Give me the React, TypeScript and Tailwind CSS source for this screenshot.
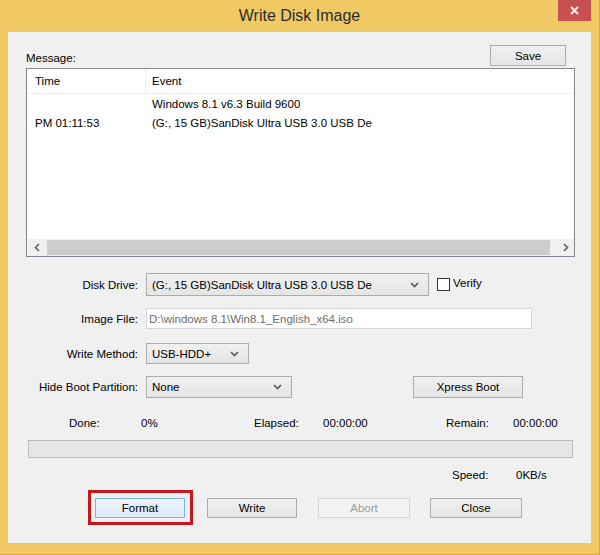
import type { ReactNode } from "react";

type BtnProps = {
  children: ReactNode;
  className?: string;
  variant?: "normal" | "focused" | "disabled";
};

function Btn({ children, className = "", variant = "normal" }: BtnProps) {
  const look =
    variant === "focused"
      ? "border-[#7eb4ea] bg-gradient-to-b from-[#ecf4fc] to-[#dcecfc] text-black"
      : variant === "disabled"
        ? "border-[#d5d5d5] bg-[#f4f4f4] text-[#9a9a9a]"
        : "border-[#acacac] bg-gradient-to-b from-[#f0f0f0] to-[#e5e5e5] text-black";
  return (
    <div className={`flex items-center justify-center border ${look} ${className}`}>
      {children}
    </div>
  );
}

function Chevron({ className = "" }: { className?: string }) {
  return (
    <svg width="9" height="6" viewBox="0 0 9 6" className={className} aria-hidden="true">
      <path d="M1 1l3.5 3.5L8 1" fill="none" stroke="currentColor" strokeWidth="1.6" />
    </svg>
  );
}

function Select({ value, className = "" }: { value: string; className?: string }) {
  return (
    <div
      className={`flex items-center justify-between border border-[#acacac] bg-gradient-to-b from-[#f0f0f0] to-[#e5e5e5] pl-[5px] pr-[9px] ${className}`}
    >
      <span className="whitespace-nowrap">{value}</span>
      <Chevron className="text-[#555]" />
    </div>
  );
}

function Row({ label, className = "", children }: { label: string; className?: string; children: ReactNode }) {
  return (
    <div className={`flex items-center ${className}`}>
      <div className="w-[130px] text-right">{label}</div>
      <div className="ml-[8px] flex items-center h-full">{children}</div>
    </div>
  );
}

export default function App() {
  return (
    <div className="w-[600px] h-[555px] bg-[#f0c864] border-r border-b border-[#d9a945] flex flex-col font-['Liberation_Sans',Arial,sans-serif] leading-[14px]">
      {/* Title bar */}
      <div className="relative h-[32px] flex items-center justify-center">
        <span className="text-[16px] text-[#2d2d2d]">Write Disk Image</span>
        <div className="absolute right-[8px] top-0 w-[33px] h-[21px] bg-[#c75050] flex items-center justify-center">
          <svg width="9" height="9" viewBox="0 0 9 9" aria-hidden="true">
            <path d="M1 1l7 7M8 1L1 8" stroke="white" strokeWidth="1.8" />
          </svg>
        </div>
      </div>

      {/* Client area */}
      <div className="ml-[8px] w-[583px] h-[511px] bg-[#f0f0f0] flex flex-col text-[11.5px] text-black">
        <div className="flex items-end justify-between pl-[18px] pr-[25px] pt-[13px]">
          <span className="mb-[1px]">Message:</span>
          <Btn className="w-[76px] h-[21px]">Save</Btn>
        </div>

        {/* Log list */}
        <div className="ml-[18px] mt-[2px] w-[549px] h-[189px] border border-[#828790] bg-white flex flex-col">
          <div className="h-[25px] flex border-b border-[#efefef]">
            <div className="w-[119px] pl-[8px] flex items-center border-r border-[#ececec]">Time</div>
            <div className="pl-[6px] flex items-center">Event</div>
          </div>
          <div className="h-[19px] flex items-center">
            <div className="w-[119px] pl-[8px]" />
            <div className="pl-[6px]">Windows 8.1 v6.3 Build 9600</div>
          </div>
          <div className="h-[19px] flex items-center">
            <div className="w-[119px] pl-[8px]">PM 01:11:53</div>
            <div className="pl-[6px]">(G:, 15 GB)SanDisk Ultra USB 3.0 USB De</div>
          </div>
          <div className="flex-1" />
          <div className="h-[17px] flex items-center bg-[#f0f0f0]">
            <div className="w-[20px] flex justify-center text-[#606060]">
              <svg width="6" height="9" viewBox="0 0 6 9" aria-hidden="true">
                <path d="M5 1L1.5 4.5 5 8" fill="none" stroke="currentColor" strokeWidth="1.6" />
              </svg>
            </div>
            <div className="w-[503px] h-[15px] bg-[#cdcdcd]" />
            <div className="flex-1" />
            <div className="w-[17px] flex justify-center text-[#606060]">
              <svg width="6" height="9" viewBox="0 0 6 9" aria-hidden="true">
                <path d="M1 1l3.5 3.5L1 8" fill="none" stroke="currentColor" strokeWidth="1.6" />
              </svg>
            </div>
          </div>
        </div>

        {/* Settings */}
        <Row label="Disk Drive:" className="mt-[16px] h-[23px]">
          <Select value="(G:, 15 GB)SanDisk Ultra USB 3.0 USB De" className="w-[283px] h-[23px]" />
          <div className="ml-[8px] w-[13px] h-[13px] border border-[#333] bg-white" />
          <span className="ml-[3px] -mt-[3px]">Verify</span>
        </Row>
        <Row label="Image File:" className="mt-[12px] h-[21px]">
          <div className="w-[386px] h-[21px] border border-[#d4d4d4] bg-white pl-[2px] flex items-center text-[#6d6d6d]">
            D:\windows 8.1\Win8.1_English_x64.iso
          </div>
        </Row>
        <Row label="Write Method:" className="mt-[14px] h-[21px]">
          <Select value="USB-HDD+" className="w-[103px] h-[21px]" />
        </Row>
        <Row label="Hide Boot Partition:" className="mt-[12px] h-[22px]">
          <Select value="None" className="w-[146px] h-[22px]" />
          <Btn className="ml-[121px] w-[110px] h-[22px]">Xpress Boot</Btn>
        </Row>

        {/* Progress */}
        <div className="mt-[18px] h-[14px] flex items-center pl-[61px]">
          <span className="w-[72px]">Done:</span>
          <span className="w-[113px]">0%</span>
          <span className="w-[69px]">Elapsed:</span>
          <span className="w-[123px]">00:00:00</span>
          <span className="w-[67px]">Remain:</span>
          <span>00:00:00</span>
        </div>
        <div className="mt-[10px] ml-[20px] w-[545px] h-[18px] border border-[#bcbcbc] bg-[#e6e6e6]" />
        <div className="mt-[10px] h-[14px] flex items-center pl-[444px]">
          <span className="w-[64px]">Speed:</span>
          <span>0KB/s</span>
        </div>

        {/* Actions */}
        <div className="mt-[8px] flex items-center pl-[80px]">
          <div className="border-[3px] border-[#c8161d] pl-[4px] pr-[5px] pt-[5px] pb-[4px]">
            <Btn variant="focused" className="w-[90px] h-[20px]">Format</Btn>
          </div>
          <Btn className="ml-[14px] w-[90px] h-[20px]">Write</Btn>
          <Btn variant="disabled" className="ml-[21px] w-[92px] h-[20px]">Abort</Btn>
          <Btn className="ml-[20px] w-[92px] h-[20px]">Close</Btn>
        </div>
      </div>
    </div>
  );
}
